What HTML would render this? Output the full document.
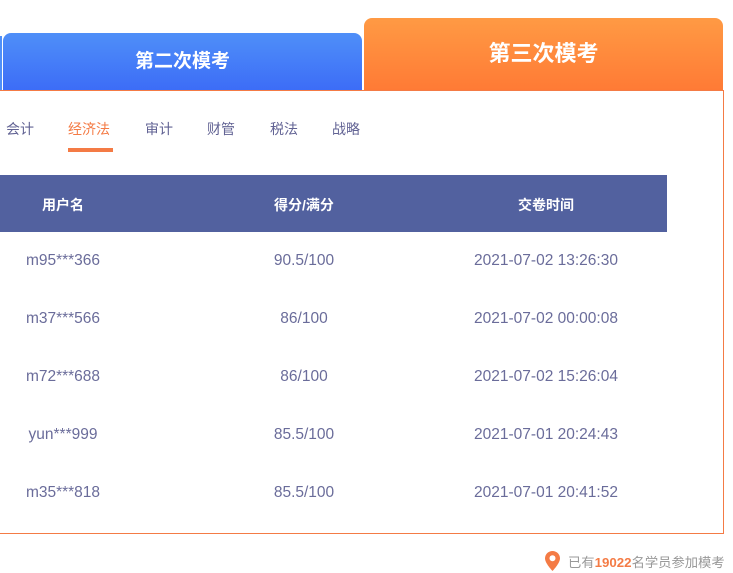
<!DOCTYPE html>
<html><head><meta charset="utf-8"><style>
*{margin:0;padding:0;box-sizing:border-box}
body{width:733px;height:573px;background:#fff;position:relative;overflow:hidden;font-family:"Liberation Sans","Noto Sans CJK SC",sans-serif}
.tab{position:absolute;color:#fff;font-weight:bold;text-align:center}
.t2{left:3px;top:33px;width:359px;height:58px;border-radius:8px 8px 0 0;background:linear-gradient(180deg,#4f8ff8,#3c6cf7);font-size:19px;line-height:58px}
.strip{left:0;top:36px;width:2px;height:55px;background:#4f8ff8}
.t3{left:364px;top:18px;width:359px;height:73px;border-radius:8px 8px 0 0;background:linear-gradient(180deg,#ff9a44,#ff7a35);font-size:22px;line-height:72px}
.box{position:absolute;left:-2px;top:90px;width:726px;height:444px;border:1px solid #f47b45;background:#fff}
.nav{position:absolute;top:119px;font-size:14px;color:#626394}
.ul{position:absolute;left:68px;top:148px;width:45px;height:4px;background:#f47b45}
.th{position:absolute;left:0;top:175px;width:667px;height:57px;background:#52619f;color:#fff;font-weight:bold;font-size:14px}
.c{position:absolute;text-align:center;width:220px}
.row{position:absolute;left:0;width:667px;font-size:15.5px;color:#6a6c9a}
.foot{position:absolute;left:568px;top:552px;font-size:13.3px;color:#999}
.foot b{color:#f47b45}
</style></head><body>
<div class="tab strip"></div>
<div class="tab t2">第二次模考</div>
<div class="tab t3">第三次模考</div>
<div class="box"></div>
<div class="nav" style="left:6px">会计</div>
<div class="nav" style="left:68px;color:#f47b45">经济法</div>
<div class="nav" style="left:145px">审计</div>
<div class="nav" style="left:207px">财管</div>
<div class="nav" style="left:270px">税法</div>
<div class="nav" style="left:332px">战略</div>
<div class="ul"></div>
<div class="th"><div class="c" style="left:-47px;top:20px">用户名</div><div class="c" style="left:194px;top:20px">得分/满分</div><div class="c" style="left:436px;top:20px">交卷时间</div></div>
<div class="row" style="top:252px"><div class="c" style="left:-47px">m95***366</div><div class="c" style="left:194px">90.5/100</div><div class="c" style="left:436px">2021-07-02 13:26:30</div></div>
<div class="row" style="top:310px"><div class="c" style="left:-47px">m37***566</div><div class="c" style="left:194px">86/100</div><div class="c" style="left:436px">2021-07-02 00:00:08</div></div>
<div class="row" style="top:368px"><div class="c" style="left:-47px">m72***688</div><div class="c" style="left:194px">86/100</div><div class="c" style="left:436px">2021-07-02 15:26:04</div></div>
<div class="row" style="top:426px"><div class="c" style="left:-47px">yun***999</div><div class="c" style="left:194px">85.5/100</div><div class="c" style="left:436px">2021-07-01 20:24:43</div></div>
<div class="row" style="top:484px"><div class="c" style="left:-47px">m35***818</div><div class="c" style="left:194px">85.5/100</div><div class="c" style="left:436px">2021-07-01 20:41:52</div></div>
<svg style="position:absolute;left:545px;top:551px" width="15" height="20" viewBox="0 0 15 20"><path d="M7.5 0C3.4 0 0 3.3 0 7.4c0 5 7.5 12.6 7.5 12.6S15 12.4 15 7.4C15 3.3 11.6 0 7.5 0z" fill="#f47b45"/><circle cx="7.5" cy="7.2" r="3" fill="#fff"/></svg>
<div class="foot">已有<b>19022</b>名学员参加模考</div>
</body></html>
